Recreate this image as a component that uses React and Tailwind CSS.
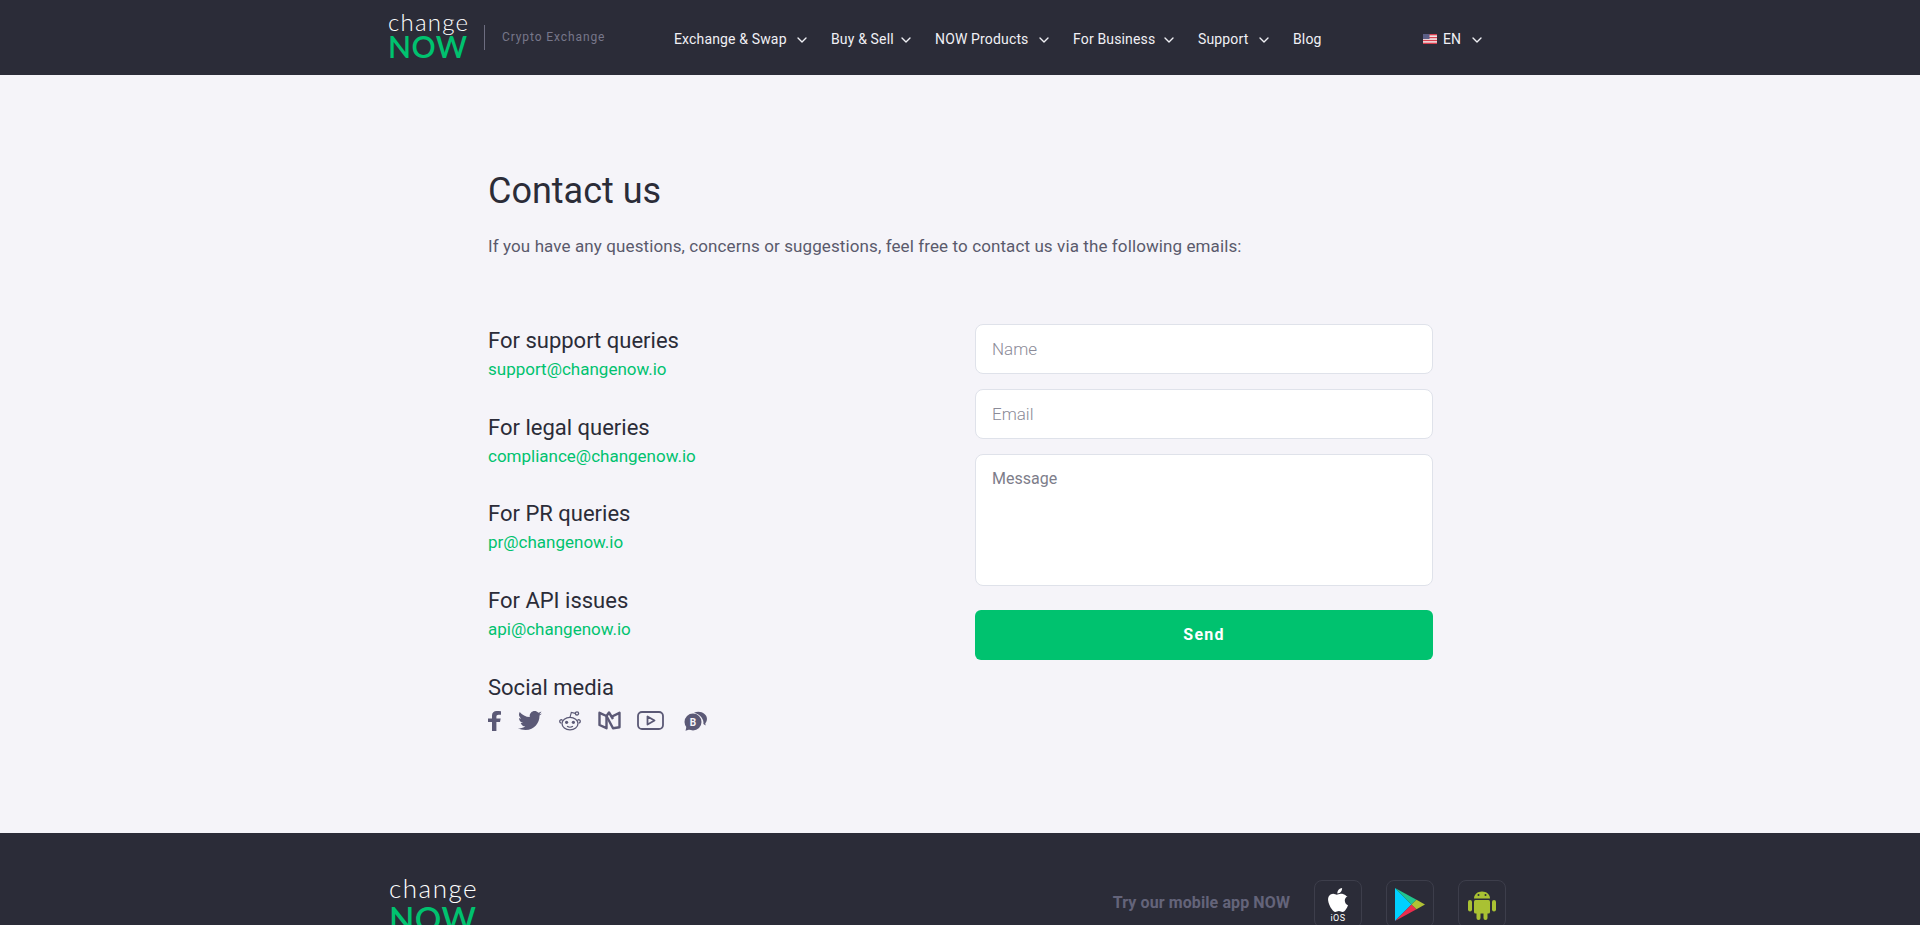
import React from "react";
import { ChevronDown } from "lucide-react";

const navItems = [
  { label: "Exchange & Swap", w: "w-[157px]", arrow: true },
  { label: "Buy & Sell", w: "w-[104px]", arrow: true },
  { label: "NOW Products", w: "w-[138px]", arrow: true },
  { label: "For Business", w: "w-[125px]", arrow: true },
  { label: "Support", w: "w-[95px]", arrow: true },
  { label: "Blog", w: "w-[60px]", arrow: false },
];

const contacts = [
  { title: "For support queries", email: "support@changenow.io" },
  { title: "For legal queries", email: "compliance@changenow.io" },
  { title: "For PR queries", email: "pr@changenow.io" },
  { title: "For API issues", email: "api@changenow.io" },
];

// Logo wordmark
const Logo = ({ big }) => (
  <div className={`flex flex-col shrink-0 font-['Lato',sans-serif] ${big ? "w-[88px]" : "w-[80px]"}`}>
    <span
      className={`font-light text-white whitespace-nowrap ${
        big
          ? "text-[26px] leading-[28px] tracking-[1.5px]"
          : "text-[24px] leading-[24px] tracking-[1.200px]"
      }`}
    >
      change
    </span>
    <span
      className={`font-semibold text-[#00c26f] whitespace-nowrap ${
        big
          ? "text-[33px] leading-[32px] tracking-[0.5px]"
          : "text-[30px] leading-[24px] tracking-[0.5px]"
      }`}
    >
      NOW
    </span>
  </div>
);

const UsFlag = () => (
  <svg width="14" height="10" viewBox="0 0 14 10">
    <rect width="14" height="10" fill="#f4f4f4" />
    <rect width="14" height="1.4" y="0" fill="#d8404f" />
    <rect width="14" height="1.4" y="2.9" fill="#d8404f" />
    <rect width="14" height="1.4" y="5.8" fill="#d8404f" />
    <rect width="14" height="1.4" y="8.6" fill="#d8404f" />
    <rect width="6.5" height="5" fill="#5c5f86" />
  </svg>
);

const Facebook = () => (
  <svg width="13" height="20" viewBox="0 0 13 20" fill="#5b5976">
    <path d="M4 20V11H0V7.4h4V4.6C4 1.5 6 0 8.6 0c1.6 0 3 .1 4.4.3v3.4h-2.4c-1.6 0-2.2.8-2.2 2v1.7h4.3L12 11H8.4v9z" />
  </svg>
);

const Twitter = () => (
  <svg width="24" height="20" viewBox="0 0 24 20" fill="#5b5976">
    <path d="M24 2.4c-.9.4-1.8.7-2.8.8 1-.6 1.8-1.6 2.2-2.7-1 .6-2 1-3.1 1.200C19.300.7 18 0 16.600 0c-2.700 0-4.900 2.200-4.900 4.900 0 .4 0 .8.1 1.100C7.700 5.800 4.100 3.900 1.700.9c-.4.7-.7 1.600-.7 2.500 0 1.700.9 3.200 2.200 4.100-.8 0-1.600-.2-2.200-.6v.1c0 2.400 1.700 4.400 3.900 4.800-.4.100-.8.200-1.300.2-.3 0-.6 0-.9-.1.600 2 2.400 3.400 4.600 3.400-1.700 1.300-3.800 2.100-6.100 2.100-.4 0-.8 0-1.200-.1C2.200 18.200 4.800 19 7.500 19c9.100 0 14-7.500 14-14v-.6c1-.7 1.800-1.600 2.500-2z" />
  </svg>
);

const Reddit = () => (
  <svg width="22" height="20" viewBox="0 0 22 20" fill="none" stroke="#5b5976" strokeWidth="1.3">
    <ellipse cx="11" cy="12.6" rx="8" ry="6.200" />
    <path d="M3.500 9.600C2.500 8 .7 8.800.7 10.300c0 1 .6 1.700 1.500 1.900" />
    <path d="M18.500 9.600c1-1.600 2.800-.8 2.800.7 0 1-.6 1.700-1.500 1.900" />
    <circle cx="18" cy="2.400" r="1.600" />
    <path d="M11 6.400 12.300 1.500 16.400 2.400" strokeWidth="1.100" />
    <circle cx="7.600" cy="11.300" r="1.600" fill="#5b5976" stroke="none" />
    <circle cx="14.400" cy="11.300" r="1.600" fill="#5b5976" stroke="none" />
    <path d="M8 15.300c1.800 1.100 4.200 1.100 6 0" strokeWidth="1.100" />
  </svg>
);

const Medium = () => (
  <svg width="23" height="19" viewBox="0 0 23 19" fill="none" stroke="#5b5976" strokeWidth="2.400" strokeLinejoin="round">
    <path d="M1.500 1.800 8.500 5V17.200L1.500 14z" />
    <path d="M8.500 5 11 1.500 15 8" />
    <path d="M13 6 21.500 1.800V16.200L15 17.200 8.500 5" />
  </svg>
);

const Youtube = () => (
  <svg width="27" height="19" viewBox="0 0 27 19" fill="none" stroke="#5b5976" strokeWidth="1.800" strokeLinejoin="round">
    <rect x="1" y="1" width="25" height="17" rx="4" />
    <path d="M10.500 5.500v8l7-4z" />
  </svg>
);

const Bitcointalk = () => (
  <svg width="25" height="20" viewBox="0 0 25 20">
    <path d="M11 1.800c3-1.800 7.700-1.500 10.500 1.200 3 2.400 3.300 6.500.8 9.200l.3 2.300-2.200-1.500c.8-4.500-3-9.500-9.400-11.200z" fill="#5b5976" />
    <circle cx="10" cy="11" r="8.500" fill="#5b5976" />
    <path d="M3.500 15.500 2.500 19.800 8 18z" fill="#5b5976" />
    <text x="10" y="14.500" textAnchor="middle" fontSize="10" fontWeight="700" fill="#f5f4f9" fontFamily="Roboto, sans-serif">B</text>
  </svg>
);

const AppleIcon = () => (
  <svg width="20" height="24" viewBox="0 0 20 24" fill="#ffffff">
    <path d="M14.100 0c.1 1.400-.4 2.700-1.200 3.700-.9 1-2.200 1.800-3.500 1.700-.2-1.300.4-2.700 1.200-3.600C11.500.8 12.900.1 14.100 0z" />
    <path d="M19.600 8.200c-1.700 1-2.800 2.500-2.800 4.400 0 2.200 1.300 3.900 3.200 4.700-.5 1.500-1.200 2.900-2.200 4.200-.9 1.200-1.800 2.400-3.300 2.400s-1.900-.9-3.600-.9-2.200.9-3.600.9c-1.400 0-2.500-1.300-3.400-2.600C1.800 18.500.4 15 .1 12.200-.2 8.600 2 5.800 5.100 5.700c1.500 0 2.800 1 3.700 1 .9 0 2.500-1.200 4.300-1 1 0 3.900.4 5.500 2.500z" />
  </svg>
);

const PlayIcon = () => (
  <svg width="30" height="33" viewBox="0 0 30 33">
    <path d="M0 0 16.500 16.500 0 33z" fill="#00d0ff" />
    <path d="M0 0 21.500 11.700 16.500 16.500z" fill="#21c58e" />
    <path d="M0 33 21.500 21.300 16.500 16.500z" fill="#ea2d4d" />
    <path d="M21.500 11.700 30 16.500 21.500 21.300 16.500 16.500z" fill="#b0c135" />
  </svg>
);

const AndroidIcon = () => (
  <svg width="28" height="31" viewBox="0 0 28 31" fill="#a9c133">
    <path d="M6 9.500C6 5.200 9.500 2.400 14 2.400s8 2.800 8 7.100z" />
    <rect x="6" y="11" width="16" height="13.500" rx="1.500" />
    <rect x="0" y="11" width="4" height="11.500" rx="2" />
    <rect x="24" y="11" width="4" height="11.500" rx="2" />
    <rect x="8.500" y="21" width="4" height="10" rx="2" />
    <rect x="15.500" y="21" width="4" height="10" rx="2" />
    <circle cx="10.500" cy="6" r="1" fill="#2b2c38" />
    <circle cx="17.500" cy="6" r="1" fill="#2b2c38" />
  </svg>
);

export default function App() {
  return (
    <div className="h-[925px] overflow-hidden bg-[#f5f4f9] font-['Roboto',sans-serif] text-[#2b2c38]">
      {/* Header */}
      <header className="h-[75px] bg-[#2b2c38] flex pl-[388px]">
        <div className="pt-[10px]">
          <Logo />
        </div>
        <div className="w-px h-[25px] mt-[25px] ml-[16px] bg-[#6d6d80]"></div>
        <span className="ml-[17px] mt-[28px] w-[102px] text-[12px] leading-[18px] tracking-[0.9px] text-[#77778a] whitespace-nowrap">
          Crypto Exchange
        </span>
        <nav className="flex ml-[70px] pt-[29px]">
          {navItems.map((item) => (
            <div key={item.label} className={`flex items-start ${item.w}`}>
              <span className="text-[14px] leading-[20px] tracking-[0.15px] text-[#f0f0f5] whitespace-nowrap">
                {item.label}
              </span>
              {item.arrow && (
                <ChevronDown className="w-[16px] h-[16px] ml-auto mr-[21px] mt-[3px] text-[#f0f0f5]" strokeWidth={2} />
              )}
            </div>
          ))}
        </nav>
        <div className="flex items-start ml-[70px] pt-[29px]">
          <span className="mt-[5px]">
            <UsFlag />
          </span>
          <span className="ml-[6px] text-[14px] leading-[20px] text-[#f0f0f5]">EN</span>
          <ChevronDown className="w-[16px] h-[16px] ml-[8px] mt-[3px] text-[#f0f0f5]" strokeWidth={2} />
        </div>
      </header>

      {/* Contact */}
      <main className="h-[758px] pl-[488px] w-[1433px] box-content">
        <h1 className="pt-[92px] text-[36px] leading-[48px] font-normal">Contact us</h1>
        <p className="mt-[18px] text-[17px] leading-[26px] tracking-[0.1px] text-[#5a5a6c]">
          If you have any questions, concerns or suggestions, feel free to contact us via the following emails:
        </p>

        <div className="flex mt-[65px]">
          <div className="w-[487px] pt-[2px]">
            {contacts.map((c) => (
              <div key={c.title} className="h-[86.700px]">
                <h3 className="text-[22px] leading-[30px] font-normal">{c.title}</h3>
                <a className="block text-[17px] leading-[26px] text-[#00c26f]">{c.email}</a>
              </div>
            ))}
            <h3 className="text-[22px] leading-[30px] font-normal">Social media</h3>
            <div className="flex items-center mt-[7px] h-[22px]">
              <Facebook />
              <span className="ml-[17px]"><Twitter /></span>
              <span className="ml-[17px]"><Reddit /></span>
              <span className="ml-[17px]"><Medium /></span>
              <span className="ml-[16px]"><Youtube /></span>
              <span className="ml-[19px]"><Bitcointalk /></span>
            </div>
          </div>

          <form className="w-[458px] flex flex-col">
            <input
              placeholder="Name"
              className="h-[50px] px-[16px] bg-white border border-[#dfe2ea] rounded-[8px] text-[17px] font-light placeholder:text-[#8b8b98] outline-none"
            />
            <input
              placeholder="Email"
              className="h-[50px] mt-[15px] px-[16px] bg-white border border-[#dfe2ea] rounded-[8px] text-[17px] font-light placeholder:text-[#8b8b98] outline-none"
            />
            <textarea
              placeholder="Message"
              className="h-[132px] mt-[15px] px-[16px] py-[12px] bg-white border border-[#dfe2ea] rounded-[8px] text-[16px] leading-[24px] placeholder:text-[#7d7d8a] outline-none resize-none"
            />
            <button
              type="button"
              className="h-[50px] mt-[24px] bg-[#00c26f] rounded-[6px] text-white text-[16px] font-bold tracking-[1.2px]"
            >
              Send
            </button>
          </form>
        </div>
      </main>

      {/* Footer */}
      <footer className="h-[300px] bg-[#2b2c38] flex pl-[389px] pr-[414px] pt-[47px]">
        <div className="mt-[-6px]">
          <Logo big />
        </div>
        <div className="ml-auto flex items-start">
          <span className="mt-[11px] text-[16px] leading-[24px] tracking-[0.1px] font-bold text-[#64647a]">Try our mobile app NOW</span>
          <div className="ml-[24px] w-[48px] h-[48px] border border-[#3d3e4b] rounded-[8px] flex flex-col items-center pt-[7px]">
            <AppleIcon />
            <span className="text-[9px] leading-[10px] mt-[1px] text-white tracking-[0.5px]">iOS</span>
          </div>
          <div className="ml-[24px] w-[48px] h-[48px] border border-[#3d3e4b] rounded-[8px] flex items-center justify-center">
            <PlayIcon />
          </div>
          <div className="ml-[24px] w-[48px] h-[48px] border border-[#3d3e4b] rounded-[8px] flex items-center justify-center">
            <AndroidIcon />
          </div>
        </div>
      </footer>
    </div>
  );
}
